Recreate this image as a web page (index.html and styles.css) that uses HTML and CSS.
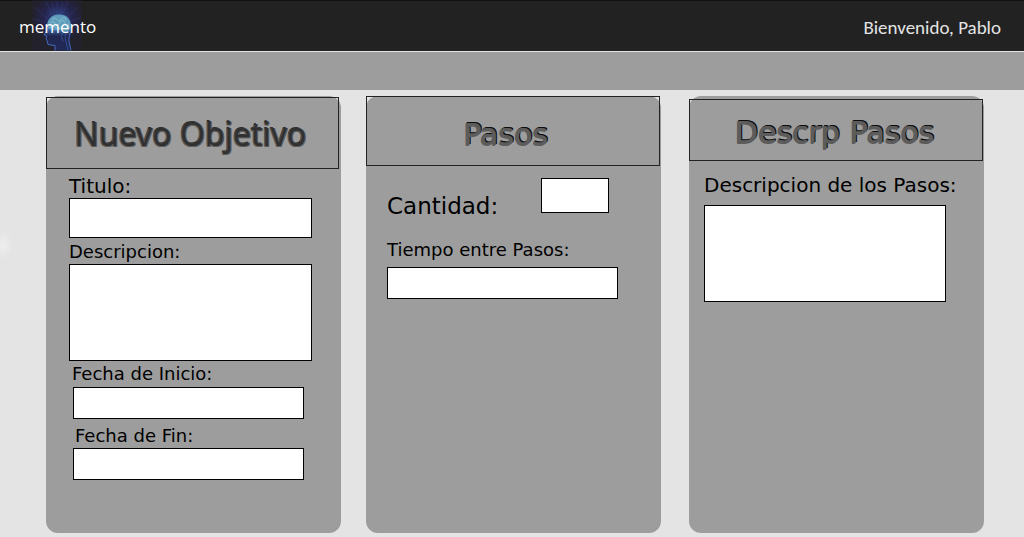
FILE: index.html
```html
<!DOCTYPE html>
<html lang="es">
<head>
<meta charset="utf-8">
<title>memento</title>
<link rel="stylesheet" href="styles.css">
</head>
<body>
<header class="topbar">
  <a class="brand" href="#">
    <svg class="brand-art" viewBox="0 0 50 50" aria-hidden="true">
      <defs>
        <radialGradient id="glow" cx="52%" cy="36%" r="52%">
          <stop offset="0" stop-color="#30488a"/>
          <stop offset=".55" stop-color="#25244c"/>
          <stop offset="1" stop-color="#22212c"/>
        </radialGradient>
        <linearGradient id="head" x1="0" y1="0" x2="0" y2="1">
          <stop offset="0" stop-color="#5f9fc4"/>
          <stop offset=".4" stop-color="#426fb0"/>
          <stop offset=".6" stop-color="#20264e"/>
          <stop offset="1" stop-color="#222a5a"/>
        </linearGradient>
      </defs>
      <rect width="50" height="50" fill="url(#glow)"/>
      <path d="M25 14V0M20 15L14 1M15 18L3 7M13 22L1 18M30 14L36 1M35 17L46 6M38 21L49 17M22 14L20 2M28 14L31 2" stroke="#4054a0" stroke-width=".7" opacity=".35"/>
      <path d="M23 50V45L16 44L15 40L14 38L15 36L12 34L15 30C14 19 19 14 27 14C36 14 40 20 39 28C39 34 36 36 37 41L39 50Z" fill="url(#head)"/>
      <path d="M23 50V45L16 44L15 40L14 38L15 36L12 34L15 30M39 28C39 34 36 36 37 41L39 50" fill="none" stroke="#4469bd" stroke-width="1"/>
      <path d="M16 28C14 20 19 15 27 15C36 15 40 21 38 28C36 33 31 31 29 29C25 31 20 29 16 28Z" fill="#5f9cbc"/>
      <path d="M18 23q3-4 5 0t5-1t5 1t4 0M20 19q3-3 5 0t5-1t4 2M18 27q3-3 6 0t6-1t6 0" fill="none" stroke="#8cc5d0" stroke-width=".8"/>
      <path d="M31 31q-3 5 0 10M34 31q-2 5 0 10l2 9" fill="none" stroke="#315099" stroke-width="1"/>
    </svg>
    <span class="brand-name">memento</span>
  </a>
  <span class="welcome">Bienvenido, Pablo</span>
</header>
<div class="band"></div>
<main class="board">
  <section class="panel goal">
    <h2 class="panel-title">Nuevo Objetivo</h2>
    <form class="fields">
      <label class="large" for="titulo">Titulo:</label>
      <input class="wide title-input" id="titulo" type="text">
      <label for="descripcion">Descripcion:</label>
      <textarea class="wide" id="descripcion"></textarea>
      <label class="date-label" for="inicio">Fecha de Inicio:</label>
      <input class="date-input" id="inicio" type="text">
      <label class="date-label end-label" for="fin">Fecha de Fin:</label>
      <input class="date-input" id="fin" type="text">
    </form>
  </section>
  <section class="panel steps">
    <h2 class="panel-title">Pasos</h2>
    <form class="fields">
      <div class="amount">
        <label for="cantidad">Cantidad:</label>
        <input id="cantidad" type="text">
      </div>
      <label for="tiempo">Tiempo entre Pasos:</label>
      <input class="date-input" id="tiempo" type="text">
    </form>
  </section>
  <section class="panel detail">
    <h2 class="panel-title">Descrp Pasos</h2>
    <form class="fields">
      <label class="large" for="detalle">Descripcion de los Pasos:</label>
      <textarea class="wide" id="detalle"></textarea>
    </form>
  </section>
</main>
</body>
</html>
```
FILE: styles.css
```css
* { box-sizing: border-box; }

body {
  margin: 0;
  min-height: 100vh;
  display: flex;
  flex-direction: column;
  background: #e4e4e4;
  color: #000;
  font-family: "DejaVu Sans", Verdana, sans-serif;
}

.topbar {
  display: flex;
  justify-content: space-between;
  height: 52px;
  padding: 0 23px 0 19px;
  background: #222;
  border-top: 1px solid #111;
  border-bottom: 1px solid #e4e4e4;
}

.brand {
  position: relative;
  color: #fff;
  font-family: "Open Sans", sans-serif;
  font-size: 17px;
  line-height: 51px;
  text-decoration: none;
}

.brand-art {
  position: absolute;
  top: -1px;
  left: 13px;
  width: 50px;
  height: 51px;
}

.brand-name { position: relative; }

.welcome {
  color: #e4e4e4;
  font-family: Carlito, Calibri, "Open Sans", sans-serif;
  font-size: 19px;
  line-height: 53px;
}

.band {
  height: 38px;
  background: #9d9d9d;
}

.board {
  flex: 1;
  display: flex;
  padding: 6px 40px 4px 46px;
  background: radial-gradient(ellipse 10px 14px at 3px 155px, #eee, transparent);
}

.panel {
  flex: 1 1 0;
  min-width: 0;
  background: #9d9d9d;
  border-radius: 12px;
}

.steps { margin-left: 25px; }
.detail { margin-left: 28px; }

.panel-title {
  display: flex;
  align-items: center;
  justify-content: center;
  height: 70px;
  margin: 0 1px 0 0;
  padding: 7px 14px 0 0;
  border: 1px solid #222;
  color: #5c5c5c;
  font-size: 30px;
  font-weight: 400;
  line-height: 36px;
  white-space: nowrap;
  text-shadow: -1px 1px 0 #5c5c5c, -1px 0 0 #5c5c5c, 1px -1px 0 #0c0c0c, 0 -1px 0 #0c0c0c;
}

.goal .panel-title {
  height: 72px;
  margin: 1px 2px 0 0;
  padding: 2px 4px 0 0;
  color: #303030;
  font-family: "Noto Sans", sans-serif;
  font-size: 32px;
  text-shadow: -1px 1px 0 #5c5c5c, 1px 1px 0 #5c5c5c, 1px 0 0 #5c5c5c, -1px -1px 0 #303030;
}

.detail .panel-title {
  height: 62px;
  margin-top: 3px;
  padding: 5px 2px 0 0;
}

.fields {
  display: flex;
  flex-direction: column;
  align-items: flex-start;
}

.goal .fields { padding: 5px 29px 0 23px; }
.steps .fields { padding: 12px 43px 0 21px; }
.detail .fields { padding: 12px 38px 0 15px; }

label {
  font-size: 18px;
  line-height: 24px;
  white-space: nowrap;
}

.large { font-size: 20px; }

input, textarea {
  display: block;
  height: 32px;
  margin: 0;
  padding: 4px 6px;
  background: #fff;
  border: 1px solid #000;
  border-radius: 0;
  font: 16px "DejaVu Sans", sans-serif;
}

textarea {
  height: 97px;
  resize: none;
}

.wide { width: 100%; }
.title-input { height: 40px; margin-bottom: 2px; }
.date-input { width: 231px; max-width: 100%; }
.goal .date-input { margin-left: 4px; }
.date-label { margin: 1px 0 1px 3px; }
.end-label { margin: 5px 0 0 6px; }

.amount {
  display: flex;
  justify-content: space-between;
  align-items: flex-start;
  width: 100%;
  padding-right: 9px;
  margin-bottom: 20px;
}

.amount label {
  padding-top: 16px;
  font-size: 23px;
}

.amount input {
  width: 68px;
  height: 35px;
}

.steps .fields > label { margin-bottom: 5px; }
.detail .large { margin-bottom: 8px; }
```
